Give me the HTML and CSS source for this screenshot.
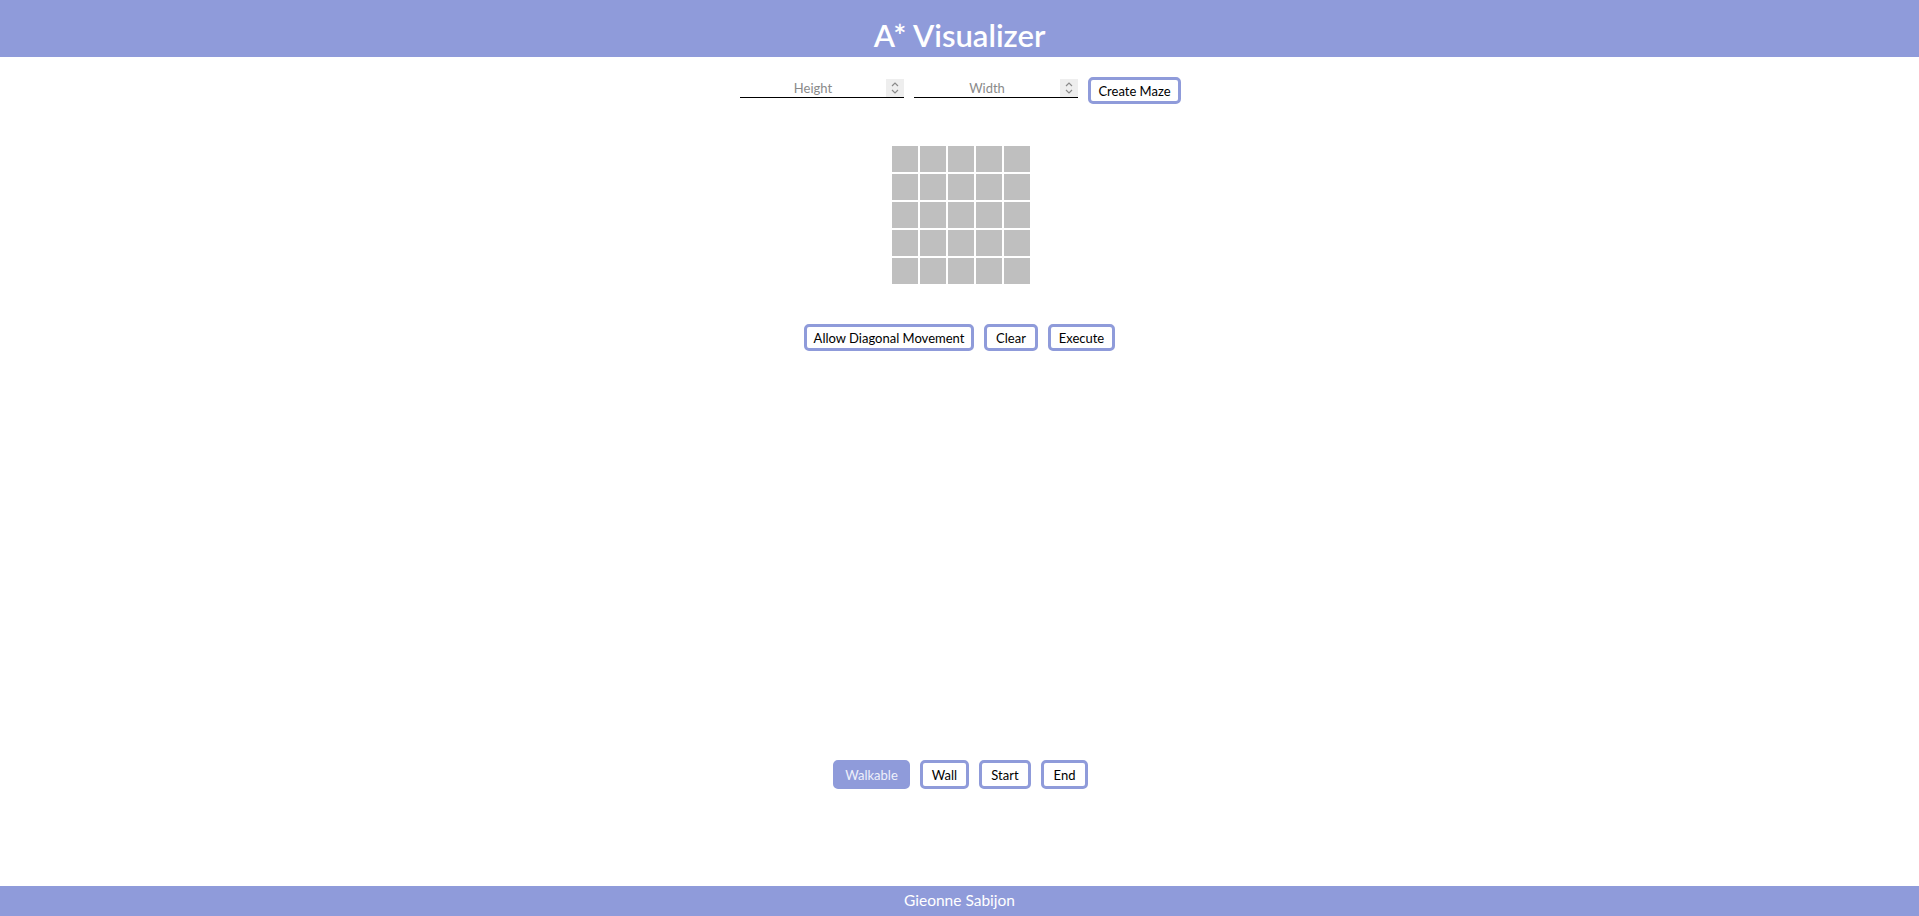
FILE: index.html
```html
<!DOCTYPE html>
<html>
<head>
<meta charset="utf-8">
<title>A* Visualizer</title>
<link rel="stylesheet" href="styles.css">
</head>
<body>
<header class="top-bar"><h1 class="title">A* Visualizer</h1></header>
<main class="content">
  <div class="maze-form">
    <label class="num-field">
      <input class="num-input" type="text" placeholder="Height">
      <span class="spin"><svg width="10" height="14" viewBox="0 0 10 14"><path d="M2 5 L5 2 L8 5 M2 9 L5 12 L8 9" fill="none" stroke="#8a8a8a" stroke-width="1.2"/></svg></span>
    </label>
    <label class="num-field">
      <input class="num-input" type="text" placeholder="Width">
      <span class="spin"><svg width="10" height="14" viewBox="0 0 10 14"><path d="M2 5 L5 2 L8 5 M2 9 L5 12 L8 9" fill="none" stroke="#8a8a8a" stroke-width="1.2"/></svg></span>
    </label>
    <button class="btn btn-create">Create Maze</button>
  </div>
  <div class="grid">
    <div class="cell"></div><div class="cell"></div><div class="cell"></div><div class="cell"></div><div class="cell"></div>
    <div class="cell"></div><div class="cell"></div><div class="cell"></div><div class="cell"></div><div class="cell"></div>
    <div class="cell"></div><div class="cell"></div><div class="cell"></div><div class="cell"></div><div class="cell"></div>
    <div class="cell"></div><div class="cell"></div><div class="cell"></div><div class="cell"></div><div class="cell"></div>
    <div class="cell"></div><div class="cell"></div><div class="cell"></div><div class="cell"></div><div class="cell"></div>
  </div>
  <div class="actions">
    <button class="btn btn-diag">Allow Diagonal Movement</button>
    <button class="btn btn-clear">Clear</button>
    <button class="btn btn-exec">Execute</button>
  </div>
</main>
<div class="tools">
  <button class="btn tool active">Walkable</button>
  <button class="btn tool">Wall</button>
  <button class="btn tool">Start</button>
  <button class="btn tool">End</button>
</div>
<footer class="bottom-bar">Gieonne Sabijon</footer>
</body>
</html>
```
FILE: styles.css
```css
* { box-sizing: border-box; }
html, body { margin: 0; padding: 0; }
body {
  height: 100vh;
  display: flex;
  flex-direction: column;
  font-family: "Lato", "Noto Sans", sans-serif;
  background: #ffffff;
  color: #000;
}
.top-bar {
  background: #8f9bda;
  height: 57px;
  display: flex;
  align-items: flex-end;
  justify-content: center;
}
.title {
  margin: 0 0 4px 0;
  color: #ffffff;
  font-size: 31px;
  font-weight: 600;
  line-height: 36px;
}
.content {
  flex: 1;
  display: flex;
  flex-direction: column;
  align-items: center;
}
.maze-form {
  margin-top: 20px;
  display: flex;
  align-items: flex-start;
  gap: 10px;
  padding-left: 2px;
}
.num-field {
  width: 164px;
  height: 20px;
  margin-top: 1px;
  border-bottom: 1px solid #000;
  display: flex;
  align-items: stretch;
}
.num-input {
  flex: 1;
  min-width: 0;
  border: none;
  outline: none;
  background: transparent;
  text-align: center;
  font-family: inherit;
  font-size: 13px;
  padding: 0;
  color: #000;
}
.num-input::placeholder { color: #8a8a8a; }
.spin {
  width: 18px;
  height: 18px;
  margin-top: 1px;
  background: #eeeeee;
  display: flex;
  align-items: center;
  justify-content: center;
}
.btn {
  font-family: inherit;
  font-size: 13px;
  background: #ffffff;
  color: #000;
  border: 3px solid #8f9bda;
  border-radius: 5px;
  padding: 0;
  height: 27px;
  cursor: pointer;
}
.btn-create { width: 93px; }
.grid {
  margin-top: 42px;
  display: grid;
  grid-template-columns: repeat(5, 26px);
  grid-auto-rows: 26px;
  gap: 2px;
  margin-left: 3px;
}
.cell { background: #bfbfbf; }
.actions {
  margin-top: 40px;
  display: flex;
  gap: 10px;
}
.btn-diag { width: 170px; }
.btn-clear { width: 54px; }
.btn-exec { width: 67px; }
.tools {
  display: flex;
  justify-content: center;
  gap: 10px;
  margin-bottom: 97px;
  padding-left: 2px;
}
.tool { height: 29px; }
.tool:nth-child(1) { width: 77px; }
.tool:nth-child(2) { width: 49px; }
.tool:nth-child(3) { width: 52px; }
.tool:nth-child(4) { width: 47px; }
.tool.active {
  background: #8f9bda;
  color: #eef0fb;
}
.bottom-bar {
  background: #8f9bda;
  height: 30px;
  padding-bottom: 2px;
  color: #ffffff;
  font-size: 15.5px;
  display: flex;
  align-items: center;
  justify-content: center;
}
```
